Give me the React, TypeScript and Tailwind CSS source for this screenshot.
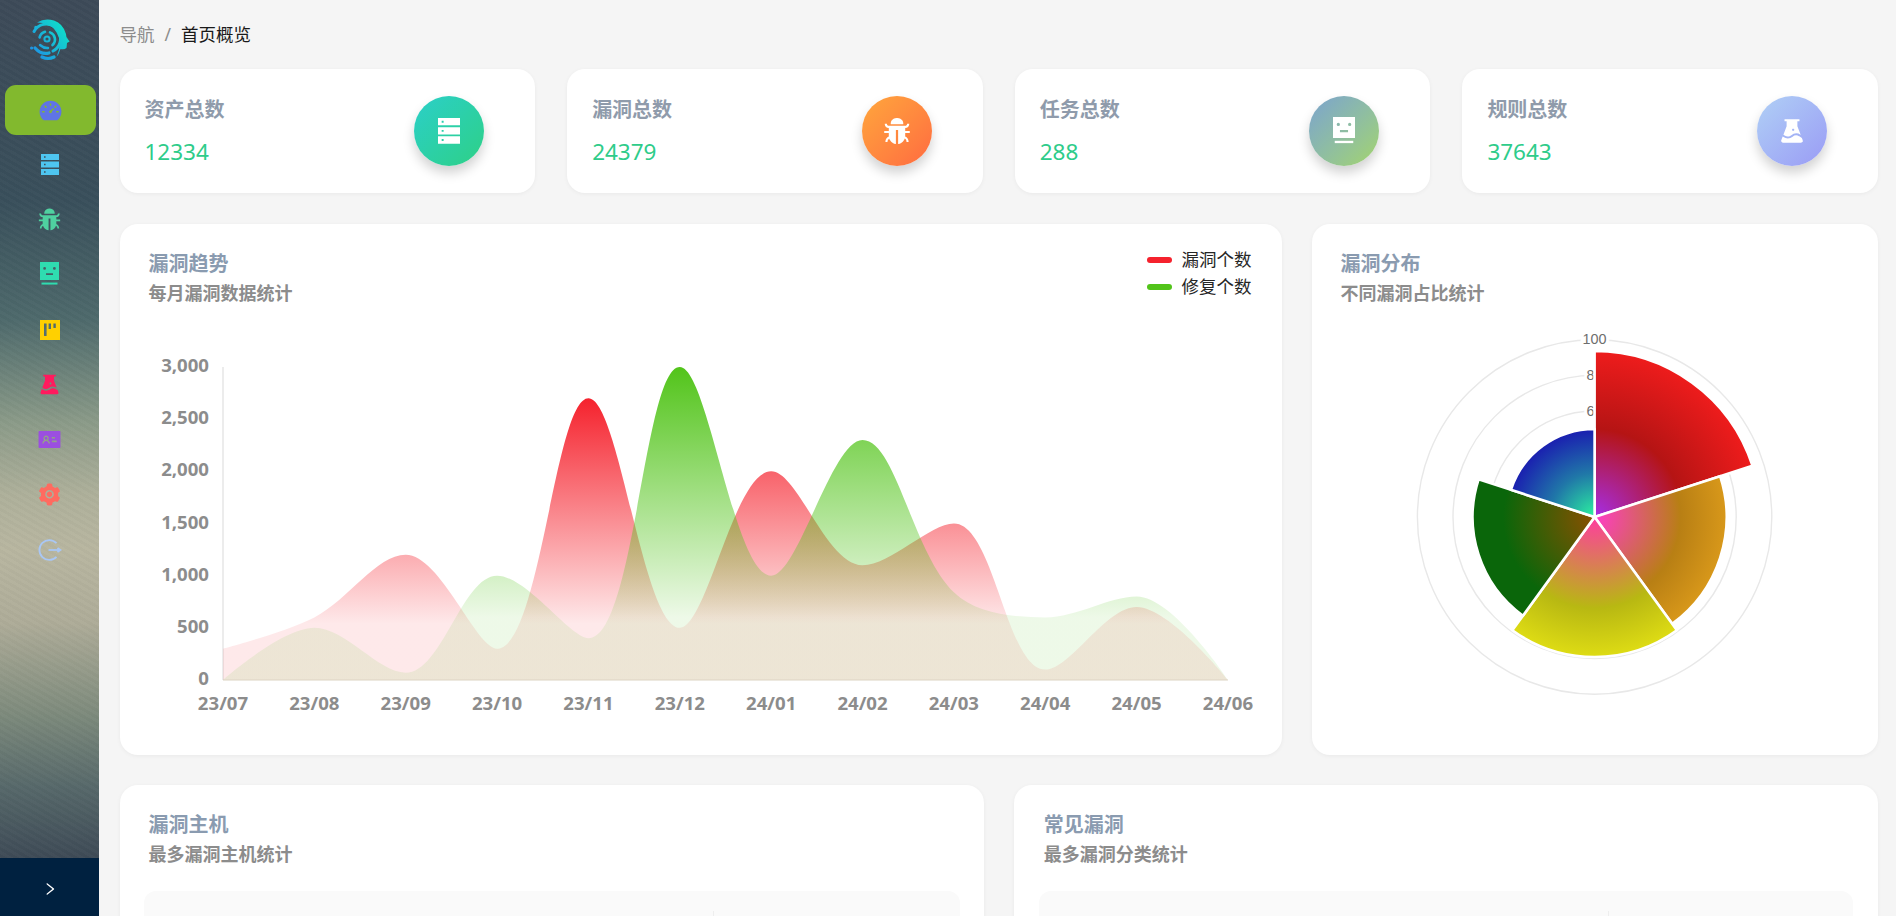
import React from "react";
import {
  AiFillBug,
  AiFillDashboard,
  AiFillExperiment,
  AiFillIdcard,
  AiFillSetting,
  AiOutlineRight,
} from "react-icons/ai";

type P = [number, number];

const red = [300, 600, 1200, 300, 2700, 500, 2000, 1100, 1500, 100, 700, 0];
const green = [0, 500, 70, 1000, 400, 3000, 1000, 2300, 840, 600, 800, 0];
const months = ["23/07", "23/08", "23/09", "23/10", "23/11", "23/12", "24/01", "24/02", "24/03", "24/04", "24/05", "24/06"];
const X0 = 103;
const STEP = 91.36;
const BASE = 360;
const UNIT = 313 / 3000;

function toPts(v: number[]): P[] {
  return v.map((d, i) => [X0 + i * STEP, BASE - d * UNIT]);
}

function clamp(v: number, a: number, b: number) {
  return Math.max(Math.min(v, Math.max(a, b)), Math.min(a, b));
}

function smoothPath(pts: P[], smooth = 0.35) {
  let d = `M${pts[0][0]} ${BASE}L${pts[0][0]} ${pts[0][1]}`;
  let c0x = pts[0][0];
  let c0y = pts[0][1];
  for (let i = 1; i < pts.length; i++) {
    const [x, y] = pts[i];
    const [px, py] = pts[i - 1];
    let c1x = x;
    let c1y = y;
    let nx = x;
    let ny = y;
    if (i < pts.length - 1) {
      const [qx, qy] = pts[i + 1];
      const lenPrev = Math.hypot(x - px, y - py);
      const lenNext = Math.hypot(qx - x, qy - y);
      const ratio = lenNext / (lenNext + lenPrev);
      nx = clamp(x + (qx - px) * smooth * ratio, qx, x);
      ny = clamp(y + (qy - py) * smooth * ratio, qy, y);
      let vx = nx - x;
      let vy = ny - y;
      c1x = clamp(x - (vx * lenPrev) / lenNext, px, x);
      c1y = clamp(y - (vy * lenPrev) / lenNext, py, y);
      vx = x - c1x;
      vy = y - c1y;
      nx = x + (vx * lenNext) / lenPrev;
      ny = y + (vy * lenNext) / lenPrev;
    }
    d += `C${c0x} ${c0y} ${c1x} ${c1y} ${x} ${y}`;
    c0x = nx;
    c0y = ny;
  }
  return d + `L${pts[pts.length - 1][0]} ${BASE}Z`;
}

function sector(cx: number, cy: number, r: number, a0: number, a1: number) {
  const pt = (a: number) => {
    const t = (a * Math.PI) / 180;
    return `${cx + r * Math.sin(t)} ${cy - r * Math.cos(t)}`;
  };
  return `M${cx} ${cy}L${pt(a0)}A${r} ${r} 0 0 1 ${pt(a1)}Z`;
}

function ServerIcon({ size, color }: { size: number; color: string }) {
  return (
    <svg width={size} height={size * 1.17} viewBox="0 0 18 21" fill={color}>
      <path fillRule="evenodd" d="M0 0h18v6H0zM3 2.2v1.6h1.6V2.2z" />
      <path fillRule="evenodd" d="M0 7.5h18v6H0zM3 9.7v1.6h1.6V9.7z" />
      <path fillRule="evenodd" d="M0 15h18v6H0zM3 17.2v1.6h1.6v-1.6z" />
    </svg>
  );
}

function FaceIcon({ size, color }: { size: number; color: string }) {
  return (
    <svg width={size} height={size * 1.27} viewBox="0 0 19 24" fill={color}>
      <path fillRule="evenodd" d="M0 0h19v18H0zM4.6 5a1.4 1.4 0 1 0 0 2.8a1.4 1.4 0 0 0 0-2.8zM14.4 5a1.4 1.4 0 1 0 0 2.8a1.4 1.4 0 0 0 0-2.8zM6 11.2v1.8h7v-1.8z" />
      <rect x="1.5" y="20.5" width="16" height="2" />
    </svg>
  );
}

function BoardIcon() {
  return (
    <svg width="20" height="20" viewBox="0 0 20 20" fill="#ffd000">
      <path fillRule="evenodd" d="M0 0h20v20H0zM4 3.5v12.5h2.6V3.5zM8.6 3.5v5.5h2.4V3.5zM13.4 3.5v4.5h2.4V3.5z" />
    </svg>
  );
}

function ExitIcon() {
  return (
    <svg width="24" height="22" viewBox="0 0 24 22" fill="none" stroke="#a9c7f5" strokeWidth="1.8">
      <path d="M18.5 4.2A9.9 9.9 0 1 0 18.5 17.8" />
      <path d="M10.5 11H22" />
      <path d="M19.5 9L22.5 11L19.5 13" fill="#a9c7f5" />
    </svg>
  );
}

function Logo() {
  return (
    <svg width="40" height="42" viewBox="0 0 40 42" fill="none">
      <defs>
        <linearGradient id="lg" gradientUnits="userSpaceOnUse" x1="2" y1="36" x2="38" y2="10">
          <stop offset="0" stopColor="#1f8fe6" />
          <stop offset="1" stopColor="#0fe0c8" />
        </linearGradient>
      </defs>
      <g stroke="url(#lg)" strokeLinecap="round">
        <circle cx="17" cy="20" r="2.6" strokeWidth="2" />
        <path d="M20 13.4A7.5 7.5 0 0 1 22.5 26" strokeWidth="2.6" />
        <path d="M9.6 18.4A7.6 7.6 0 0 1 15 12.8" strokeWidth="2.6" />
        <path d="M4 12.5A14 14 0 0 1 25 8" strokeWidth="3" />
        <path d="M29 13A14 14 0 0 1 23 32" strokeWidth="3" />
        <path d="M5 29Q11 36 19 34" strokeWidth="3.2" />
        <path d="M10 26Q14 29.5 18 29" strokeWidth="2.4" />
        <path d="M12 38Q18 41 24 38" strokeWidth="3.2" />
        <circle cx="6" cy="8.5" r="1.1" fill="url(#lg)" strokeWidth="1.4" />
        <circle cx="1.6" cy="29" r="0.9" fill="#1f8fe6" strokeWidth="1.4" />
      </g>
      <path
        d="M7 3.5Q15 -1.5 24 1.5Q33 4.5 36 15L36.4 18L39.6 22.6L37 24L36.5 29Q34 31 30.5 30Q29 35 26.5 38Q31 28 29 19Q26 8.5 17 5.4Q12 3.4 7 3.5Z"
        fill="url(#lg)"
      />
    </svg>
  );
}

const cardCls = "bg-white rounded-[18px] shadow-[0_1px_4px_rgba(0,0,0,0.05)]";

function Header({ title, sub }: { title: string; sub: string }) {
  return (
    <div className="flex flex-col">
      <div className="h-[28px] leading-[28px] text-[20px] font-bold text-[#8a9bb0]">{title}</div>
      <div className="h-[28px] mt-[1px] leading-[28px] text-[18px] font-bold text-[#8c8c8c]">{sub}</div>
    </div>
  );
}

function Stat({ title, value, gradient, icon }: { title: string; value: string; gradient: string; icon: React.ReactNode }) {
  return (
    <div className={`${cardCls} h-[124px] pl-[25px] pr-[51px] flex items-center justify-between`}>
      <div className="flex flex-col pt-[2px]">
        <div className="h-[28px] leading-[28px] text-[20px] font-bold text-[#8f9bab]">{title}</div>
        <div className="h-[32px] mt-[12px] leading-[32px] text-[22.5px] text-[#2ecc8a]">{value}</div>
      </div>
      <div className={`w-[70px] h-[70px] rounded-full flex items-center justify-center shadow-[0_7px_12px_rgba(0,0,0,0.18)] ${gradient}`}>
        {icon}
      </div>
    </div>
  );
}

function TrendChart() {
  const redPts = toPts(red);
  const greenPts = toPts(green);
  const yTicks = [0, 500, 1000, 1500, 2000, 2500, 3000];
  return (
    <svg width="1162" height="435" viewBox="0 0 1162 435" className="block mt-[13px]">
      <defs>
        <linearGradient id="rf" gradientUnits="userSpaceOnUse" x1="0" y1={BASE - 2700 * UNIT} x2="0" y2={BASE}>
          <stop offset="0" stopColor="#f5222d" />
          <stop offset="0.8" stopColor="#f5222d" stopOpacity="0.1" />
          <stop offset="1" stopColor="#f5222d" stopOpacity="0.1" />
        </linearGradient>
        <linearGradient id="gf" gradientUnits="userSpaceOnUse" x1="0" y1={BASE - 3000 * UNIT} x2="0" y2={BASE}>
          <stop offset="0" stopColor="#52c41a" />
          <stop offset="0.8" stopColor="#52c41a" stopOpacity="0.1" />
          <stop offset="1" stopColor="#52c41a" stopOpacity="0.1" />
        </linearGradient>
      </defs>
      <line x1={X0} x2={X0} y1={BASE - 3000 * UNIT} y2={BASE} stroke="#e6e6e6" strokeWidth="1.5" />
      <path d={smoothPath(redPts)} fill="url(#rf)" />
      <path d={smoothPath(greenPts)} fill="url(#gf)" />
      <line x1={X0} x2={X0 + 11 * STEP} y1={BASE} y2={BASE} stroke="#dcd3c2" strokeWidth="1" />
      {yTicks.map((t) => (
        <text key={t} x={89} y={BASE - t * UNIT + 5} textAnchor="end" className="text-[18.6px] font-bold fill-[#8c8c8c]">
          {t.toLocaleString("en-US")}
        </text>
      ))}
      {months.map((m, i) => (
        <text key={m} x={X0 + i * STEP} y={BASE + 30} textAnchor="middle" className="text-[18.6px] font-bold fill-[#8c8c8c]">
          {m}
        </text>
      ))}
    </svg>
  );
}

function PolarChart() {
  const cx = 282.6;
  const cy = 197;
  const rings: [number, string][] = [
    [106, "60"],
    [141.6, "80"],
    [177.2, "100"],
  ];
  const sectors = [
    { id: "s0", r: 166, a: 0, mid: 0.53, stops: ["#a52ee6", "#b51414", "#ee1c1c"] },
    { id: "s1", r: 132, a: 72, mid: 0.65, stops: ["#ff3cc8", "#b87f14", "#d8981a"] },
    { id: "s2", r: 140, a: 144, mid: 0.65, stops: ["#ff3ca0", "#b8b812", "#dedc14"] },
    { id: "s3", r: 122, a: 216, mid: 0.75, stops: ["#8a5000", "#0a660a", "#0a660a"] },
    { id: "s4", r: 88, a: 288, mid: 0.5, stops: ["#2cf2a0", "#2078a8", "#1a1eb0"] },
  ];
  return (
    <svg width="566" height="435" viewBox="0 0 566 435" className="block mt-[13px]">
      <defs>
        {sectors.map((s) => (
          <radialGradient key={s.id} id={s.id} gradientUnits="userSpaceOnUse" cx={cx} cy={cy} r={s.r}>
            <stop offset="0" stopColor={s.stops[0]} />
            <stop offset={s.mid} stopColor={s.stops[1]} />
            <stop offset="1" stopColor={s.stops[2]} />
          </radialGradient>
        ))}
      </defs>
      {rings.map(([r]) => (
        <circle key={r} cx={cx} cy={cy} r={r} fill="none" stroke="#e8e8e8" strokeWidth="1.4" />
      ))}
      {rings.map(([r, t]) => (
        <text
          key={t}
          x={cx}
          y={cy - r + 4.5}
          textAnchor="middle"
          stroke="#ffffff"
          strokeWidth="6"
          paintOrder="stroke"
          className="text-[14.4px] fill-[#6e6e6e] [font-family:'Liberation_Sans',sans-serif]"
        >
          {t}
        </text>
      ))}
      {sectors.map((s) => (
        <path key={s.id} d={sector(cx, cy, s.r, s.a, s.a + 72)} fill={`url(#${s.id})`} stroke="#ffffff" strokeWidth="2.6" strokeLinejoin="round" />
      ))}
    </svg>
  );
}

function TableStub() {
  return (
    <div className="mt-[23px] h-[60px] bg-[#fafafa] rounded-t-[12px] flex">
      <div className="w-[570px] mt-[20px] h-[40px] border-r border-[#eeeeee]" />
    </div>
  );
}

const menu: React.ReactNode[] = [
  <ServerIcon key="a" size={18} color="#4ec5f0" />,
  <AiFillBug key="b" size={25} color="#4fd1a0" />,
  <FaceIcon key="c" size={19} color="#2fdcb0" />,
  <BoardIcon key="d" />,
  <AiFillExperiment key="e" size={25} color="#ff1a5e" />,
  <AiFillIdcard key="f" size={25} color="#9b4fe0" />,
  <AiFillSetting key="g" size={25} color="#ff6b60" />,
  <ExitIcon key="h" />,
];

function Sidebar() {
  return (
    <aside className="w-[99px] shrink-0 h-full flex flex-col [background:repeating-linear-gradient(30deg,rgba(255,255,255,0.016)_0_3px,rgba(0,0,0,0.016)_3px_6px),linear-gradient(180deg,#3d4a58_0%,#394f5b_22%,#4e6a6c_35%,#8a9a88_46%,#aeb09a_54%,#b8b6a0_60%,#aeac98_68%,#7d8a7c_78%,#56686a_86%,#3d4955_94%,#3d4955_100%)]">
      <div className="flex-1 flex flex-col items-center">
        <div className="h-[85px] flex items-center justify-center w-full pb-[6px]">
          <Logo />
        </div>
        <div className="w-[91px] h-[50px] ml-[1px] rounded-[11px] bg-[#82b92e] flex items-center justify-center">
          <AiFillDashboard size={25} color="#5f74e6" />
        </div>
        {menu.map((m, i) => (
          <div key={i} className={`h-[55px] w-full flex items-center justify-center ${i === 0 ? "mt-[2px]" : ""}`}>
            {m}
          </div>
        ))}
      </div>
      <div className="h-[58px] shrink-0 bg-[#002140] flex items-center justify-center pt-[3px]">
        <AiOutlineRight size={16} color="#ffffff" />
      </div>
    </aside>
  );
}

export default function App() {
  return (
    <div className="w-[1896px] h-[916px] overflow-hidden flex bg-[#f5f5f5] [font-family:'Noto_Sans','Noto_Sans_CJK_SC',sans-serif]">
      <Sidebar />
      <main className="flex-1 min-w-0 pl-[20.5px] pr-[18px] flex flex-col">
        <div className="h-[69px] shrink-0 flex items-center text-[17.5px] pb-[1px]">
          <span className="text-[#8c8c8c]">导航</span>
          <span className="mx-[10px] text-[#8c8c8c]">/</span>
          <span className="text-[#1a1a1a]">首页概览</span>
        </div>
        <div className="grid grid-cols-4 gap-x-[32px] shrink-0">
          <Stat
            title="资产总数"
            value="12334"
            gradient="bg-gradient-to-br from-[#2ccfc8] to-[#2fd085]"
            icon={<ServerIcon size={22} color="#ffffff" />}
          />
          <Stat
            title="漏洞总数"
            value="24379"
            gradient="bg-gradient-to-br from-[#ffa63c] to-[#ff6a40]"
            icon={<AiFillBug size={30} color="#ffffff" />}
          />
          <Stat
            title="任务总数"
            value="288"
            gradient="bg-gradient-to-br from-[#7ca2ce] to-[#a4d468]"
            icon={<FaceIcon size={22} color="#ffffff" />}
          />
          <Stat
            title="规则总数"
            value="37643"
            gradient="bg-gradient-to-br from-[#b0d0f5] to-[#9a9bf5]"
            icon={<AiFillExperiment size={30} color="#ffffff" />}
          />
        </div>
        <div className="mt-[31px] flex gap-x-[30px] h-[531px] shrink-0">
          <section className={`${cardCls} w-[1162px] shrink-0 pt-[26px]`}>
            <div className="px-[29px] flex justify-between items-start relative">
              <Header title="漏洞趋势" sub="每月漏洞数据统计" />
              <div className="flex flex-col text-[17.5px] text-[#262626] mr-[1px] -mt-[4px]">
                <div className="h-[27px] flex items-center">
                  <span className="w-[25px] h-[6px] rounded-full bg-[#f5222d] mr-[10px]" />
                  漏洞个数
                </div>
                <div className="h-[27px] flex items-center">
                  <span className="w-[25px] h-[6px] rounded-full bg-[#52c41a] mr-[10px]" />
                  修复个数
                </div>
              </div>
            </div>
            <TrendChart />
          </section>
          <section className={`${cardCls} flex-1 pt-[26px]`}>
            <div className="px-[29px]">
              <Header title="漏洞分布" sub="不同漏洞占比统计" />
            </div>
            <PolarChart />
          </section>
        </div>
        <div className="mt-[30px] grid grid-cols-2 gap-x-[30px] shrink-0">
          <section className={`${cardCls} h-[200px] pt-[26px] px-[24px]`}>
            <div className="pl-[5px]">
              <Header title="漏洞主机" sub="最多漏洞主机统计" />
            </div>
            <TableStub />
          </section>
          <section className={`${cardCls} h-[200px] pt-[26px] px-[25px]`}>
            <div className="pl-[5px]">
              <Header title="常见漏洞" sub="最多漏洞分类统计" />
            </div>
            <TableStub />
          </section>
        </div>
      </main>
    </div>
  );
}
